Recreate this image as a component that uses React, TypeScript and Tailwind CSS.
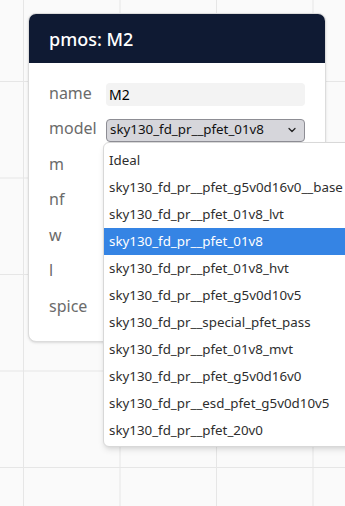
import { ChevronDown } from "lucide-react";

const options = [
  "Ideal",
  "sky130_fd_pr__pfet_g5v0d16v0__base",
  "sky130_fd_pr__pfet_01v8_lvt",
  "sky130_fd_pr__pfet_01v8",
  "sky130_fd_pr__pfet_01v8_hvt",
  "sky130_fd_pr__pfet_g5v0d10v5",
  "sky130_fd_pr__special_pfet_pass",
  "sky130_fd_pr__pfet_01v8_mvt",
  "sky130_fd_pr__pfet_g5v0d16v0",
  "sky130_fd_pr__esd_pfet_g5v0d10v5",
  "sky130_fd_pr__pfet_20v0",
];

const fields = ["m", "nf", "w", "l", "spice"];

const App = () => {
  return (
    <div
      className="relative w-[345px] h-[506px] overflow-hidden bg-[#fafafa] font-['Noto_Sans',sans-serif]"
      style={{
        backgroundImage:
          "linear-gradient(to right, #e6e6e6 1px, transparent 1px), linear-gradient(to bottom, #e6e6e6 1px, transparent 1px)",
        backgroundSize: "96.5px 96.5px",
        backgroundPosition: "23px 81px",
      }}
    >
      <div className="ml-[28px] mt-[13px] w-[298px] rounded-lg border border-[#dcdcdc] bg-white overflow-hidden shadow-sm">
        <div className="h-[49px] bg-[#0f1a33] flex items-center px-5">
          <h1 className="text-[18px] font-medium text-white leading-none">pmos: M2</h1>
        </div>
        <div className="flex flex-col gap-[12.5px] px-5 pt-5 pb-[22px]">
          <div className="flex items-center h-[23px]">
            <span className="w-[57px] mb-1 text-[16px] text-[#6b6b6b]">name</span>
            <div className="flex-1 h-[23px] rounded bg-[#f3f3f3] text-[14px] text-black flex items-center px-[3px]">M2</div>
          </div>
          <div className="flex items-center h-[23px]">
            <span className="w-[57px] mb-1 text-[16px] text-[#6b6b6b]">model</span>
            <div className="flex-1 h-[23px] rounded border border-[#8d8d94] bg-[#d6d6db] text-[13.333px] text-[#111] flex items-center justify-between pl-[3px] pr-[6px]">
              <span>sky130_fd_pr__pfet_01v8</span>
              <ChevronDown size={12} strokeWidth={2.5} className="text-[#222]" />
            </div>
          </div>
          {fields.map((f) => (
            <div key={f} className="flex items-center h-[23px]">
              <span className="w-[57px] mb-1 text-[16px] text-[#6b6b6b]">{f}</span>
              <div className="flex-1 h-[23px] rounded bg-[#f3f3f3]" />
            </div>
          ))}
        </div>
      </div>

      <ul className="absolute left-[103px] top-[142px] w-[260px] h-[305px] rounded-md border border-[#d8d8d8] bg-white shadow-md py-[4px]">
        {options.map((o) => (
          <li
            key={o}
            className={
              o === "sky130_fd_pr__pfet_01v8"
                ? "h-[27px] flex items-center px-[5px] text-[13.333px] whitespace-nowrap bg-[#3584e4] text-white"
                : "h-[27px] flex items-center px-[5px] text-[13.333px] whitespace-nowrap text-[#2e2e2e]"
            }
          >
            {o}
          </li>
        ))}
      </ul>
    </div>
  );
};

export default App;
